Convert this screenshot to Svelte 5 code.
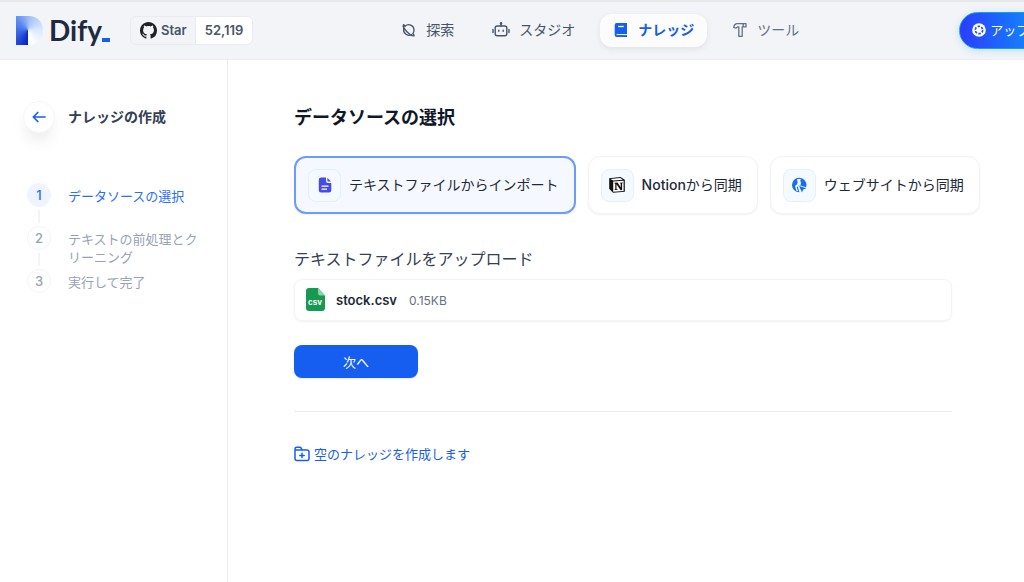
<script lang="ts">
    const steps = ["データソースの選択", "テキストの前処理とクリーニング", "実行して完了"];
    const sources = [
        { id: "file", latin: "", label: "テキストファイルからインポート" },
        { id: "notion", latin: "Notion", label: "から同期" },
        { id: "web", latin: "", label: "ウェブサイトから同期" },
    ];

    let currentStep = $state(0);
    let source = $state("file");
</script>

<div class="page">
    <header class="topbar">
        <a class="brand" href="#home" aria-label="Dify">
            <span class="brand-mark"></span>
            <span class="brand-name">Dify</span>
            <span class="brand-cursor"></span>
        </a>
        <a class="github" href="#github">
            <span class="star">
                <svg width="17" height="17" viewBox="0 0 16 16" fill="#1f2328">
                    <path d="M8 0C3.58 0 0 3.58 0 8c0 3.54 2.29 6.53 5.47 7.59.4.07.55-.17.55-.38 0-.19-.01-.82-.01-1.49-2.01.37-2.53-.49-2.69-.94-.09-.23-.48-.94-.82-1.13-.28-.15-.68-.52-.01-.53.63-.01 1.08.58 1.23.82.72 1.21 1.87.87 2.33.66.07-.52.28-.87.51-1.07-1.78-.2-3.64-.89-3.64-3.95 0-.87.31-1.59.82-2.15-.08-.2-.36-1.02.08-2.12 0 0 .67-.21 2.2.82.64-.18 1.32-.27 2-.27s1.36.09 2 .27c1.53-1.04 2.2-.82 2.2-.82.44 1.1.16 1.92.08 2.12.51.56.82 1.27.82 2.15 0 3.07-1.87 3.75-3.65 3.95.29.25.54.73.54 1.48 0 1.07-.01 1.93-.01 2.2 0 .21.15.46.55.38A8.01 8.01 0 0 0 16 8c0-4.42-3.58-8-8-8z" />
                </svg>
                Star
            </span>
            <span class="count">52,119</span>
        </a>

        <nav>
            <a href="#explore">
                <svg width="16" height="16" viewBox="0 0 16 16" fill="none" stroke="currentColor" stroke-width="1.3" stroke-linecap="round">
                    <path d="M4 4.200a5.300 5.300 0 0 1 9 3.600c0 1.500-.2 2.700-1.100 3.900" />
                    <path d="M2.800 6.500a5.300 5.300 0 0 0 7.600 6.100" />
                    <path d="M4 4.200c-.3-.8-.8-1.400-1.400-1.400-.8 1.400.9 4.600 3.600 7.200 2.600 2.600 5.700 4.400 7 3.600.2-.6-.4-1.200-1.300-1.900" />
                    <path d="M2.600 2.800c-.5.500-.4 2 .2 3.700" />
                </svg>
                探索
            </a>
            <a href="#studio">
                <svg width="18" height="16" viewBox="0 0 18 16" fill="none" stroke="currentColor" stroke-width="1.4" stroke-linecap="round">
                    <rect x="3.200" y="4" width="11.600" height="9.700" rx="2" />
                    <path d="M9 4V1.500M1 7.500v3M17 7.500v3M6.800 8.300v1M11.200 8.300v1" />
                    <circle cx="9" cy="1.400" r=".6" fill="currentColor" />
                </svg>
                スタジオ
            </a>
            <a class="active" href="#knowledge" aria-current="page">
                <svg width="16" height="16" viewBox="0 0 16 16" fill="none">
                    <path d="M3.800 1H14v14H3.700A2 2 0 0 1 1.700 13V3A2 2 0 0 1 3.800 1z" fill="#155eef" />
                    <path d="M3.600 12.600H14" stroke="#fff" />
                    <path d="M5.200 4.500h5.500" stroke="#fff" stroke-width="1.300" />
                </svg>
                ナレッジ
            </a>
            <a class="quiet" href="#tools">
                <svg width="16" height="16" viewBox="0 0 16 16" fill="none" stroke="currentColor" stroke-width="1.300" stroke-linejoin="round">
                    <path d="M4.700 1.700H14v3.200h-3.800v9.400H6.800V4.900H5.500L3.800 6.200 1.700 5.500C2 3.500 3 1.900 4.700 1.700z" />
                    <path d="M11.200 1.700v3.200" />
                </svg>
                ツール
            </a>
        </nav>

        <button class="upgrade">
            <svg width="14" height="14" viewBox="0 0 14 14">
                <circle cx="7" cy="7" r="6.800" fill="#fff" />
                <circle cx="7" cy="7" r="3.700" fill="none" stroke="#1f50f8" stroke-width="1.700" stroke-dasharray="2.500 1.375" />
            </svg>
            アップグレード
        </button>
    </header>

    <div class="body">
        <aside>
            <div class="side-head">
                <button class="back" aria-label="戻る">
                    <svg width="16" height="16" viewBox="0 0 16 16" fill="none" stroke="#155eef" stroke-width="1.700" stroke-linecap="round" stroke-linejoin="round">
                        <path d="M14 8H2.500M6.800 3.500L2.300 8l4.500 4.500" />
                    </svg>
                </button>
                <h2>ナレッジの作成</h2>
            </div>
            <ol class="steps">
                {#each steps as step, i (step)}
                    <li class:current={i === currentStep}>
                        <span class="num">{i + 1}</span>
                        <span class="step-label">{step}</span>
                    </li>
                {/each}
            </ol>
        </aside>

        <main>
            <h1>データソースの選択</h1>
            <div class="sources">
                {#each sources as s (s.id)}
                    <button
                        class="source"
                        class:selected={s.id === source}
                        aria-pressed={s.id === source}
                        onclick={() => (source = s.id)}
                    >
                        <span class="tile">
                            {#if s.id === "file"}
                                <svg width="16" height="16" viewBox="0 0 16 16">
                                    <path d="M4 .5h5V4a2 2 0 0 0 2 2h3.300v7.300a2.200 2.200 0 0 1-2.200 2.200H4a2.200 2.200 0 0 1-2.200-2.200V2.700A2.200 2.200 0 0 1 4 .5z" fill="#444ce7" />
                                    <path d="M10.300.8L14 4.600h-2.700a1 1 0 0 1-1-1z" fill="#444ce7" />
                                    <path d="M5 9.200h6M5 12.200h4.500" stroke="#fff" stroke-width="1.300" stroke-linecap="round" />
                                </svg>
                            {:else if s.id === "notion"}
                                <svg width="18" height="18" viewBox="0 0 18 18">
                                    <path d="M1.200 2.300L12.500 1l4.300 2.800v12L5 16.800l-3.800-4z" fill="#111" />
                                    <path d="M2.500 2.900l9.700-.9 2.600 1.700-9.600.7z" fill="#fff" />
                                    <path d="M5.200 5.500l10.400-.7v10.100l-10.400.8z" fill="#fff" />
                                    <path d="M6.500 6.700l3-.2 3.200 4.700V7.500l-1-.2v-.6l3.200-.2v.6l-.8.300v6.500l-1.500.3-4.100-6v4.800l1.200.2v.6l-3.200.2v-.6l.8-.3V7.700l-.8-.2z" fill="#111" />
                                </svg>
                            {:else}
                                <svg width="16" height="16" viewBox="0 0 16 16">
                                    <path d="M8 .8a7.200 7.200 0 1 0 .4 14.400L6.900 9.900c-.3-1 .7-2 1.700-1.700l6.500 2A7.200 7.200 0 0 0 8 .8z" fill="#1570ef" />
                                    <path d="M6 2.300L9.800 1.700 9.300 4l.7 1.600-.4 2.400-2 .3-.9 1.200-1 .5.400 1.600.9 2.500-1.300.2-1.200-3.300-.3-2.200 1.700-1.300.8-2z" fill="#f5faff" />
                                    <path d="M8 9l7.400 2.300-3.200 1.200L11 15.500z" fill="#1570ef" />
                                </svg>
                            {/if}
                        </span>
                        <span class="source-label">{#if s.latin}<b>{s.latin}</b>{/if}{s.label}</span>
                    </button>
                {/each}
            </div>

            <h3>テキストファイルをアップロード</h3>
            <div class="file">
                <svg width="20" height="24" viewBox="0 0 20 24">
                    <path d="M3 0h9l7 7.500V20a3 3 0 0 1-3 3H3a3 3 0 0 1-3-3V3a3 3 0 0 1 3-3z" fill="#169951" />
                    <path d="M12 0l7 7.500h-5a2 2 0 0 1-2-2z" fill="#8fd0aa" />
                    <text x="9" y="17" text-anchor="middle" font-size="8" font-weight="700" fill="#fff">csv</text>
                </svg>
                <span class="file-name">stock.csv</span>
                <span class="file-size">0.15KB</span>
            </div>
            <button class="next" onclick={() => (currentStep = Math.min(currentStep + 1, steps.length - 1))}>次へ</button>
            <hr />
            <a class="empty" href="#empty">
                <svg width="16" height="16" viewBox="0 0 16 16" fill="none" stroke="currentColor" stroke-width="1.500" stroke-linecap="round" stroke-linejoin="round">
                    <path d="M1 5V3a1.700 1.700 0 0 1 1.700-1.700h3.200c.6 0 1 .3 1.300.8l1 2H13A2 2 0 0 1 15 6v6.500a2 2 0 0 1-2 2H3a2 2 0 0 1-2-2V4.100h7" />
                    <path d="M8 7.200v4.400M5.800 9.400h4.400" />
                </svg>
                空のナレッジを作成します
            </a>
        </main>
    </div>
</div>

<style>
    :global(body) {
        background: #fff;
    }

    .page {
        display: flex;
        flex-direction: column;
        min-height: 100vh;
        overflow: hidden;
        font-family: Inter, "Noto Sans CJK JP", sans-serif;
        font-size: 14px;
        color: #1d2939;
    }

    a {
        color: inherit;
        text-decoration: none;
    }

    button {
        font: inherit;
        color: inherit;
        cursor: pointer;
    }

    svg {
        flex: none;
    }

    h1,
    h2,
    h3 {
        margin: 0;
    }

    .topbar {
        display: flex;
        align-items: center;
        box-sizing: border-box;
        height: 60px;
        padding-left: 16px;
        white-space: nowrap;
        background: #f2f4f7;
        border-top: 2px solid #e6e8ea;
        border-bottom: 1px solid #eceef2;
    }

    .topbar > * {
        flex: none;
    }

    .brand {
        display: flex;
        align-items: center;
        width: 114px;
    }

    .brand-mark {
        width: 27px;
        height: 29px;
        border-radius: 0 14px 14px 0;
        background: conic-gradient(from 180deg at 12px 14px, #0524c4, #2f5be0 60deg, #5a8af0 130deg, #a5c3fa 190deg, #d6e5fd 260deg, #fff 345deg);
    }

    .brand-name {
        margin-left: 6px;
        font-family: Lato, sans-serif;
        font-size: 28px;
        font-weight: 700;
        line-height: 28px;
        padding-bottom: 2px;
        color: #1d2a3f;
    }

    .brand-cursor {
        align-self: flex-end;
        width: 8px;
        height: 4px;
        margin-bottom: 4px;
        background: #155eef;
    }

    .github {
        display: flex;
        height: 27px;
        border: 1px solid #e9ebf0;
        border-radius: 6px;
        overflow: hidden;
        font-size: 13px;
        font-weight: 600;
        line-height: 27px;
        color: #475467;
    }

    .star {
        display: flex;
        align-items: center;
        gap: 4px;
        padding: 0 8px 0 9px;
        border-right: 1px solid #e9ebf0;
    }

    .count {
        padding: 0 9px;
        background: #fff;
    }

    nav {
        display: flex;
        gap: 12px;
        margin: 0 147px 0 135px;
    }

    nav a {
        display: flex;
        align-items: center;
        gap: 9px;
        height: 31px;
        padding: 0 13px 2px;
        border-radius: 12px;
        line-height: 30px;
        color: #475467;
    }

    nav a.active {
        background: #fcfcfd;
        font-weight: 700;
        color: #155eef;
        box-shadow: 0 2px 6px rgba(16, 24, 40, 0.08);
    }

    nav a.quiet {
        color: #667085;
    }

    .upgrade {
        display: flex;
        align-items: center;
        gap: 4px;
        height: 37px;
        padding: 0 16px 2px 12px;
        border: 1px solid #0ba5ec;
        border-radius: 20px;
        background: linear-gradient(90deg, #2b3dff, #1580ff 66px, #0ba5ec);
        box-shadow: 0 2px 8px rgba(46, 144, 250, 0.2);
        font-size: 13px;
        color: #fff;
    }

    .body {
        display: flex;
        flex: 1;
    }

    aside {
        flex: none;
        box-sizing: border-box;
        width: 228px;
        padding: 41px 23px 0;
        border-right: 1px solid #eaecf0;
    }

    .side-head {
        display: flex;
        align-items: center;
        gap: 13px;
    }

    .back {
        display: flex;
        align-items: center;
        justify-content: center;
        width: 32px;
        height: 32px;
        padding: 0;
        border: 1px solid #f5f6f8;
        border-radius: 50%;
        background: #fff;
        box-shadow: 0 10px 16px -4px rgba(16, 24, 40, 0.1);
    }

    h2 {
        font-size: 14px;
        font-weight: 600;
        line-height: 20px;
        color: #344054;
    }

    .steps {
        margin: 50px 0 0;
        padding: 0 0 0 4px;
        list-style: none;
    }

    .steps li {
        display: flex;
        gap: 17px;
        position: relative;
        min-height: 43px;
        font-size: 13px;
        line-height: 18px;
        color: #98a2b3;
    }

    .steps li:not(:last-child)::after {
        content: "";
        position: absolute;
        top: 27px;
        left: 11px;
        width: 2px;
        height: 13px;
        background: #f2f4f7;
    }

    .num {
        flex: none;
        display: flex;
        align-items: center;
        justify-content: center;
        box-sizing: border-box;
        width: 24px;
        height: 24px;
        border: 1px solid #f2f4f7;
        border-radius: 50%;
        font-weight: 500;
    }

    .step-label {
        padding-top: 4px;
    }

    .current .num {
        border-color: #eff4ff;
        background: #eff4ff;
    }

    .steps .current {
        color: #2970ff;
    }

    main {
        flex: 1;
        min-width: 0;
        padding: 43px 43px 40px 66px;
    }

    h1 {
        font-size: 18px;
        font-weight: 700;
        line-height: 30px;
        color: #101828;
    }

    .sources {
        display: flex;
        gap: 12px;
        margin-top: 23px;
    }

    .source {
        display: flex;
        flex: none;
        align-items: center;
        gap: 8px;
        box-sizing: border-box;
        height: 58px;
        padding: 0 15px 0 12px;
        border: 1px solid #f2f4f7;
        border-radius: 12px;
        background: #fff;
        box-shadow: 0 1px 2px rgba(16, 24, 40, 0.06);
        white-space: nowrap;
    }

    .source.selected {
        border: 2px solid #6b9bfb;
        background: #f5f8ff;
    }

    .source-label {
        line-height: 20px;
    }

    .source-label b {
        font-weight: 500;
    }

    .tile {
        display: flex;
        align-items: center;
        justify-content: center;
        width: 31px;
        height: 31px;
        border: 1px solid #e3f0fe;
        border-radius: 8px;
        background: #f5faff;
    }

    h3 {
        margin-top: 32px;
        font-size: 16px;
        font-weight: 400;
        line-height: 26px;
        color: #344054;
    }

    .file {
        display: flex;
        align-items: center;
        box-sizing: border-box;
        max-width: 658px;
        height: 42px;
        margin-top: 7px;
        padding: 0 11px;
        border: 1px solid #f2f4f7;
        border-radius: 8px;
        box-shadow: 0 1px 2px rgba(16, 24, 40, 0.06);
    }

    .file-name {
        margin: 0 12px 0 10px;
        font-size: 13px;
        font-weight: 600;
    }

    .file-size {
        font-size: 12px;
        color: #667085;
    }

    .next {
        display: block;
        width: 124px;
        height: 33px;
        margin-top: 24px;
        padding: 0;
        border: 0;
        border-radius: 8px;
        background: #155eef;
        box-shadow: 0 1px 2px rgba(16, 24, 40, 0.1);
        font-size: 13px;
        color: #fff;
    }

    hr {
        max-width: 658px;
        height: 1px;
        margin: 33px 0 32px;
        border: 0;
        background: #eaecf0;
    }

    .empty {
        display: inline-flex;
        align-items: center;
        gap: 4px;
        font-size: 13px;
        line-height: 20px;
        color: #155eef;
    }
</style>
